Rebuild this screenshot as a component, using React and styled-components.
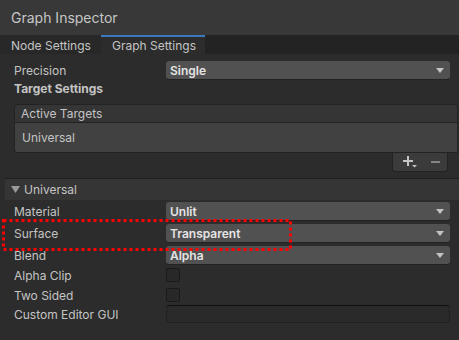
import React from "react";
import styled, { createGlobalStyle } from "styled-components";

const Global = createGlobalStyle`
  html, body { margin: 0; padding: 0; background: #2c2c2c; }
  body { font-family: Inter, "Noto Sans", sans-serif; }
`;

const Window = styled.div`
  position: relative;
  width: 459px;
  height: 340px;
  display: flex;
  flex-direction: column;
  background: #2c2c2c;
  color: #c4c4c4;
  font-size: 12px;
  overflow: hidden;
`;

const TitleBar = styled.div`
  height: 35px;
  display: flex;
  align-items: center;
  padding-left: 11px;
  background: #383838;
  font-size: 14px;
  color: #c6c6c6;
`;

const TabBar = styled.div`
  height: 19px;
  display: flex;
  background: #232323;
`;

const Tab = styled.div`
  box-sizing: border-box;
  width: ${(p) => p.$w}px;
  display: flex;
  align-items: center;
  padding-left: 11px;
  background: ${(p) => (p.$active ? "#2c2c2c" : "#282828")};
  border-top: 2px solid ${(p) => (p.$active ? "#3a79bb" : "transparent")};
  color: #c4c4c4;
`;

const Content = styled.div`
  display: flex;
  flex-direction: column;
  padding-top: 7px;
`;

const Row = styled.div`
  height: 18px;
  display: flex;
  align-items: center;
  padding-left: 14px;
  padding-right: 9px;
  margin-bottom: ${(p) => p.$mb || 0}px;
`;

const Label = styled.div`
  width: 152px;
  flex: none;
  font-weight: ${(p) => (p.$bold ? 700 : 400)};
  color: #c4c4c4;
`;

const SectionTitle = styled.div`
  height: 19px;
  display: flex;
  align-items: center;
  padding-left: 14px;
  font-weight: 700;
  color: #c4c4c4;
`;

const Dropdown = styled.div`
  flex: 1;
  box-sizing: border-box;
  height: 18px;
  display: flex;
  align-items: center;
  justify-content: space-between;
  padding: 0 6px 0 4px;
  background: #515151;
  border-radius: 3px;
  box-shadow: 0 1px 0 #232323;
  color: #e4e4e4;
  font-weight: 600;
`;

const Arrow = () => (
  <svg width="8" height="5" viewBox="0 0 8 5">
    <path d="M0 0 H8 L4 5 Z" fill="#c4c4c4" />
  </svg>
);

const ListBox = styled.div`
  margin: 6px 1px 0 14px;
  display: flex;
  flex-direction: column;
`;

const ListHeader = styled.div`
  box-sizing: border-box;
  height: 19px;
  display: flex;
  align-items: center;
  padding-left: 6px;
  background: #353535;
  border: 1px solid #232323;
  border-radius: 3px 3px 0 0;
`;

const ListBody = styled.div`
  box-sizing: border-box;
  height: 30px;
  display: flex;
  align-items: center;
  padding-left: 7px;
  background: #414141;
  border: 1px solid #232323;
  border-top: none;
  border-radius: 0 0 0 3px;
`;

const ListFooter = styled.div`
  align-self: flex-end;
  box-sizing: border-box;
  width: 56px;
  height: 19px;
  margin-right: 10px;
  display: flex;
  align-items: center;
  gap: 14px;
  padding-left: 10px;
  background: #3b3b3b;
  border: 1px solid #232323;
  border-top: none;
  border-radius: 0 0 3px 3px;
`;

const Foldout = styled.div`
  box-sizing: border-box;
  height: 22px;
  margin: 6px 0 2px 5px;
  display: flex;
  align-items: center;
  gap: 4px;
  padding-left: 6px;
  background: #353535;
  border-top: 1px solid #1f1f1f;
  color: #c4c4c4;
`;

const Checkbox = styled.div`
  box-sizing: border-box;
  width: 14px;
  height: 14px;
  background: #282828;
  border: 1px solid #1a1a1a;
  border-radius: 2px;
`;

const TextField = styled.div`
  flex: 1;
  box-sizing: border-box;
  height: 18px;
  background: #2a2a2a;
  border: 1px solid #212121;
  border-top-color: #0f0f0f;
  border-radius: 3px;
`;

const Highlight = styled.svg`
  position: absolute;
  left: 2px;
  top: 219px;
  pointer-events: none;
`;

const Dd = ({ children }) => (
  <Dropdown>
    <span>{children}</span>
    <Arrow />
  </Dropdown>
);

export default function App() {
  return (
    <>
      <Global />
      <Window>
        <TitleBar>Graph Inspector</TitleBar>
        <TabBar>
          <Tab $w={101}>Node Settings</Tab>
          <Tab $w={104} $active>
            Graph Settings
          </Tab>
        </TabBar>
        <Content>
          <Row>
            <Label>Precision</Label>
            <Dd>Single</Dd>
          </Row>
          <SectionTitle>Target Settings</SectionTitle>
          <ListBox>
            <ListHeader>Active Targets</ListHeader>
            <ListBody>Universal</ListBody>
            <ListFooter>
              <svg width="14" height="12" viewBox="0 0 14 12">
                <path d="M4 0 H6 V4 H10 V6 H6 V10 H4 V6 H0 V4 H4 Z" fill="#c4c4c4" />
                <path d="M9 9 H14 L11.5 11.5 Z" fill="#c4c4c4" />
              </svg>
              <svg width="9" height="2" viewBox="0 0 9 2">
                <rect width="9" height="2" fill="#858585" />
              </svg>
            </ListFooter>
          </ListBox>
          <Foldout>
            <svg width="9" height="7" viewBox="0 0 9 7">
              <path d="M0 0 H9 L4.5 7 Z" fill="#9a9a9a" />
            </svg>
            Universal
          </Foldout>
          <Row $mb={4}>
            <Label>Material</Label>
            <Dd>Unlit</Dd>
          </Row>
          <Row $mb={4}>
            <Label>Surface</Label>
            <Dd>Transparent</Dd>
          </Row>
          <Row $mb={2}>
            <Label>Blend</Label>
            <Dd>Alpha</Dd>
          </Row>
          <Row $mb={2}>
            <Label>Alpha Clip</Label>
            <Checkbox />
          </Row>
          <Row $mb={1}>
            <Label>Two Sided</Label>
            <Checkbox />
          </Row>
          <Row>
            <Label>Custom Editor GUI</Label>
            <TextField />
          </Row>
        </Content>
        <Highlight width="292" height="33" viewBox="0 0 292 33">
          <rect
            x="1.5"
            y="1.5"
            width="287"
            height="29"
            fill="none"
            stroke="#ff0000"
            strokeWidth="3"
            strokeDasharray="3 3"
          />
        </Highlight>
      </Window>
    </>
  );
}
